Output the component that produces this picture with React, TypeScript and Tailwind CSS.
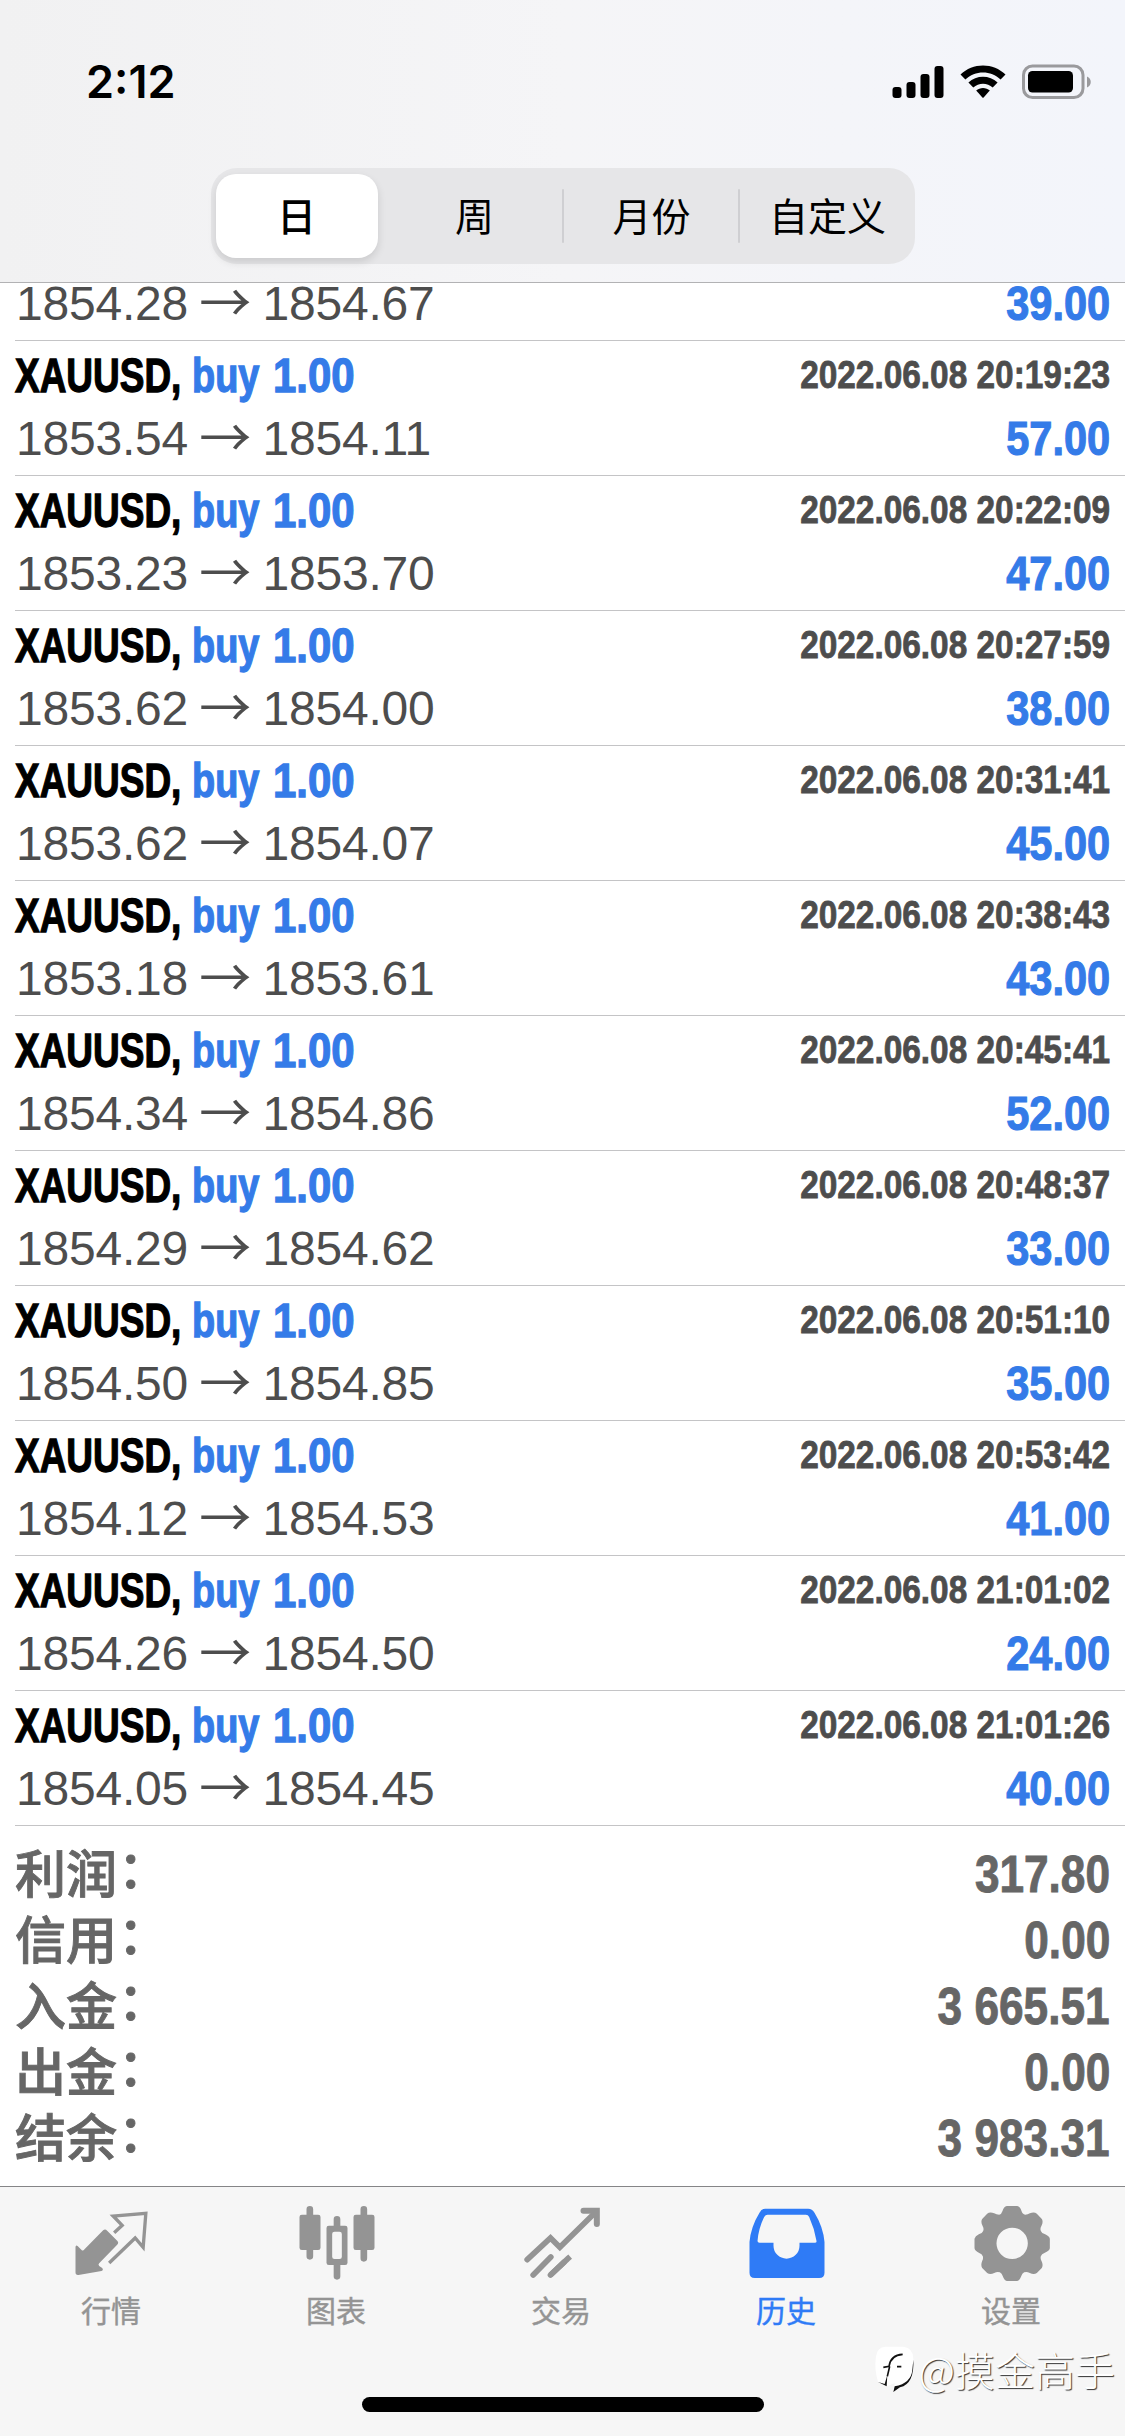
import clsx from "clsx";
import type { ReactNode } from "react";

interface Deal {
  open: string;
  close: string;
  time: string;
  profit: string;
}

const deals: Deal[] = [
  { open: "1853.54", close: "1854.11", time: "2022.06.08 20:19:23", profit: "57.00" },
  { open: "1853.23", close: "1853.70", time: "2022.06.08 20:22:09", profit: "47.00" },
  { open: "1853.62", close: "1854.00", time: "2022.06.08 20:27:59", profit: "38.00" },
  { open: "1853.62", close: "1854.07", time: "2022.06.08 20:31:41", profit: "45.00" },
  { open: "1853.18", close: "1853.61", time: "2022.06.08 20:38:43", profit: "43.00" },
  { open: "1854.34", close: "1854.86", time: "2022.06.08 20:45:41", profit: "52.00" },
  { open: "1854.29", close: "1854.62", time: "2022.06.08 20:48:37", profit: "33.00" },
  { open: "1854.50", close: "1854.85", time: "2022.06.08 20:51:10", profit: "35.00" },
  { open: "1854.12", close: "1854.53", time: "2022.06.08 20:53:42", profit: "41.00" },
  { open: "1854.26", close: "1854.50", time: "2022.06.08 21:01:02", profit: "24.00" },
  { open: "1854.05", close: "1854.45", time: "2022.06.08 21:01:26", profit: "40.00" },
];

const totals = [
  { label: "利润", value: "317.80" },
  { label: "信用", value: "0.00" },
  { label: "入金", value: "3 665.51" },
  { label: "出金", value: "0.00" },
  { label: "结余", value: "3 983.31" },
];

const periods = ["日", "周", "月份", "自定义"];

function StatusBar() {
  return (
    <div className="flex h-[168px] items-start justify-between pl-[86px] pr-[33px] pt-[54px]">
      <span className="font-['Inter'] text-[45px] font-semibold leading-[56px] text-black">2:12</span>
      <div className="flex items-center pt-[10px]">
        <svg width="52" height="34" viewBox="0 0 52 34" className="mr-[16px]">
          <rect x="0.5" y="22" width="9" height="11" rx="3" />
          <rect x="14.5" y="17" width="9" height="16" rx="3" />
          <rect x="28.5" y="9" width="9" height="24" rx="3" />
          <rect x="42.5" y="1" width="9" height="32" rx="3" />
        </svg>
        <svg width="46" height="34" viewBox="0 0 46 34" className="mr-[16px]">
          <path d="M0.5 9.6 C12.5 -2.6 33.5 -2.6 45.5 9.6 L40.6 14.6 C31 5.2 15 5.2 5.4 14.6 Z" />
          <path d="M8.4 17.6 C16.4 9.8 29.6 9.8 37.6 17.6 L32.7 22.5 C27.4 17.4 18.6 17.4 13.3 22.5 Z" />
          <path d="M16.2 25.6 C20 22.2 26 22.2 29.8 25.6 L23.6 32.4 Q23 33 22.4 32.4 Z" />
        </svg>
        <svg width="70" height="36" viewBox="0 0 70 36">
          <rect x="1.5" y="2" width="59.5" height="31.5" rx="9" fill="none" stroke="#9a9a9d" strokeWidth="3" />
          <rect x="6" y="7" width="45" height="21.5" rx="4.5" />
          <path d="M65 12.5 C70 14.5 70 21.5 65 23.5 Z" fill="#9a9a9d" />
        </svg>
      </div>
    </div>
  );
}

function PeriodPicker() {
  return (
    <div className="mx-auto grid h-24 w-[704px] grid-cols-4 rounded-[26px] bg-[#e6e6e8] font-['Noto_Sans_CJK_SC',sans-serif] text-[39px] text-black">
      {periods.map((period, index) => (
        <button key={period} type="button" className={clsx("relative flex items-center justify-center pb-[4px]", index === 0 && "pr-[4px] font-medium", index > 1 && "pl-[2px]")}>
          {index === 0 && <span className="absolute inset-y-[6px] left-[5px] right-[9px] rounded-[20px] bg-white shadow-[0_4px_8px_rgba(0,0,0,0.12)]" />}
          {index > 1 && <span className="absolute -left-px top-[21px] h-[54px] w-[2px] rounded-full bg-[#cfcfd2]" />}
          <span className="relative">{period}</span>
        </button>
      ))}
    </div>
  );
}

function Prices({ open, close }: { open: string; close: string }) {
  return (
    <span className="whitespace-pre pl-px text-[48px] tracking-[-0.2px] text-[#4d4d4d]">
      {open} <span className="relative top-[2px] -mx-[2px] font-['Noto_Sans_CJK_SC',sans-serif] text-[52px] leading-[0] tracking-normal">→</span> {close}
    </span>
  );
}

function Profit({ children }: { children: ReactNode }) {
  return <span className="origin-right scale-x-[0.865] text-[48px] font-bold text-[#347be8] [-webkit-text-stroke:1.1px_currentColor]">{children}</span>;
}

function DealRow({ deal }: { deal: Deal }) {
  return (
    <li className="ml-[15px] h-[135px] border-b border-[#c4c4c6] pr-[15px] pt-[3px]">
      <div className="flex justify-between text-[48px] font-bold leading-[63px]">
        <div className="flex [-webkit-text-stroke:1.3px_currentColor]">
          <span className="w-[177px] origin-left scale-x-[0.77] text-black">XAUUSD,</span>
          <span className="w-[81px] origin-left scale-x-[0.79] text-[#347be8]">buy</span>
          <span className="origin-left scale-x-[0.873] text-[#347be8]">1.00</span>
        </div>
        <span className="origin-right scale-x-[0.856] text-[39px] leading-[61px] text-[#4d4d4d] [-webkit-text-stroke:0.8px_currentColor]">{deal.time}</span>
      </div>
      <div className="flex justify-between leading-[63px]">
        <Prices open={deal.open} close={deal.close} />
        <Profit>{deal.profit}</Profit>
      </div>
    </li>
  );
}

function Totals() {
  return (
    <dl className="h-[360px] pl-[15px] pr-[15px] pt-[14px] text-[51px] text-[#666666]">
      {totals.map((item) => (
        <div key={item.label} className="flex h-[66px] justify-between">
          <dt className="font-['Noto_Sans_CJK_SC',sans-serif] font-medium leading-[62px] [-webkit-text-stroke:0.9px_currentColor]">
            {item.label}<span className="relative -top-[5px] left-px">：</span>
          </dt>
          <dd className="origin-right scale-x-[0.866] font-bold leading-[69px] [-webkit-text-stroke:0.9px_currentColor]">{item.value}</dd>
        </div>
      ))}
    </dl>
  );
}

function QuotesIcon() {
  return (
    <svg width="80" height="80" viewBox="97.5 69 240 240" fill="none">
      <path d="M188 151 Q194 146 200 152 L230 182 Q236 188 230 194 L176 250 Q172 254 176 258 L185 264 Q190 270 183 273 L114 285 Q105 286 105 277 V201 Q106 193 112 199 L124 211 Q128 213 132 208 Z" fill="currentColor" />
      <path d="M221 158 L245 136 L218 108 L316 100 L308 202 L284 174 L206 249" stroke="currentColor" strokeWidth="10" />
    </svg>
  );
}

function ChartIcon() {
  return (
    <svg width="80" height="80" viewBox="772.5 69 240 240" fill="none" stroke="currentColor" strokeWidth="20" strokeLinecap="round">
      <path d="M808 88 V229 M970 88 V235 M889.5 118 V145 M889.5 245 V289" />
      <rect x="777" y="104" width="63" height="106" rx="7" fill="currentColor" stroke="none" />
      <rect x="939" y="104" width="63" height="106" rx="7" fill="currentColor" stroke="none" />
      <rect x="858" y="137" width="63" height="118" rx="7" fill="currentColor" stroke="none" />
      <rect x="875" y="155" width="29" height="82" rx="7" fill="#f6f6f6" stroke="none" />
    </svg>
  );
}

function TradeIcon() {
  return (
    <svg width="80" height="80" viewBox="127.5 69 240 240" fill="none" stroke="currentColor" strokeWidth="17" strokeLinecap="round">
      <path d="M140 239 L210 174 L238 202 L345 97" />
      <path d="M309 92 H349 V132" strokeWidth="18" />
      <path d="M158 285 L211 231" />
      <path d="M210 285 L262 236 L269 230" strokeLinecap="butt" />
      <path d="M210 285 L250 247" />
    </svg>
  );
}

function HistoryIcon() {
  return (
    <svg width="80" height="80" viewBox="802.5 69 240 240" fill="currentColor">
      <path fillRule="evenodd" d="M854 86 H983 Q995 86 1002 98 Q1028 140 1032 186 V278 Q1032 294 1016 294 H823 Q807 294 807 278 V186 Q811 140 837 98 Q843 86 854 86 Z M861 104 Q855 104 851 111 Q834 146 831 183 Q831 188 837 188 H879 V197 A39 39 0 0 0 957 197 V188 H1003 Q1009 188 1008 183 Q1002 146 986 111 Q983 104 976 104 Z" />
    </svg>
  );
}

function SettingsIcon() {
  return (
    <svg width="80" height="80" viewBox="367.5 69 240 240" fill="currentColor">
      <path
        fillRule="evenodd"
        d="M469 78 H500 Q509 80 513 93 Q516 103 524 104 Q532 104 538 100 Q551 95 559 101 L574 117 Q579 125 573 137 Q568 145 571 153 Q574 161 584 163 Q596 168 598 176 V205 Q596 214 583 218 Q573 221 571 229 Q569 237 573 243 Q579 255 574 264 L559 279 Q550 285 538 279 Q529 274 521 277 Q515 280 512 289 Q508 301 500 303 H469 Q461 301 457 289 Q454 280 448 277 Q440 274 431 279 Q419 285 410 279 L395 264 Q390 255 395 243 Q399 237 397 229 Q395 221 385 218 Q374 214 372 205 V176 Q374 168 385 163 Q395 161 398 153 Q401 145 396 137 Q390 125 395 117 L410 101 Q418 95 431 100 Q438 104 446 104 Q453 103 456 93 Q460 80 469 78 Z M485 143 A47 47 0 1 0 485 237 A47 47 0 1 0 485 143 Z"
      />
    </svg>
  );
}

const tabs = [
  { label: "行情", icon: <QuotesIcon /> },
  { label: "图表", icon: <ChartIcon /> },
  { label: "交易", icon: <TradeIcon /> },
  { label: "历史", icon: <HistoryIcon />, active: true },
  { label: "设置", icon: <SettingsIcon /> },
];

function TabBar() {
  return (
    <nav className="relative h-[250px] border-t border-[#858587] bg-[#f6f6f6] pt-[16px]">
      <div className="grid grid-cols-5">
        {tabs.map((tab) => (
          <button key={tab.label} type="button" className={clsx("flex flex-col items-center", tab.active ? "text-[#2f7bf6]" : "text-[#949494]")}>
            {tab.icon}
            <span className="mt-[4px] pr-[3px] font-['Noto_Sans_CJK_SC',sans-serif] text-[30px] leading-[44px] [-webkit-text-stroke:0.4px_currentColor]">{tab.label}</span>
          </button>
        ))}
      </div>
      <div className="absolute bottom-[24px] left-[362px] h-[15px] w-[402px] rounded-full bg-black" />
      <div className="absolute right-[10px] top-[156px] flex items-center">
        <svg width="42" height="48" viewBox="72 516 126 144" className="mr-[3px]">
          <path d="M106 521 H160 Q190 524 190 558 V598 Q188 630 150 640 L130 654 L134 630 L112 640 L84 626 Q72 590 78 550 Q82 522 106 521 Z" fill="#fff" />
          <path d="M190 560 Q194 632 150 643 L130 657 L134 640 Q184 630 187 590 Z M84 627 L104 633 L112 606 L110 640 Z" fill="#111" />
          <path d="M100 583 L117 580 Q122 546 158 544 M119 580 L112 610 M141 581 H154" fill="none" stroke="#111" strokeWidth="5" />
        </svg>
        <span className="font-['Noto_Sans_CJK_SC',sans-serif] text-[40px] font-light leading-[52px] text-white [text-shadow:1px_1px_1px_#333]">@摸金高手</span>
      </div>
    </nav>
  );
}

export default function App() {
  return (
    <main className="flex h-[2436px] w-[1125px] flex-col overflow-hidden bg-white font-['Liberation_Sans',sans-serif]">
      <header className="h-[283px] shrink-0 border-b border-[#b2b2b4] bg-linear-to-r from-[#f1f1f2] via-[#f5f5f7] to-[#f3f5fb]">
        <StatusBar />
        <PeriodPicker />
      </header>
      <ul className="h-[1543px] shrink-0">
        <li className="ml-[15px] flex h-[58px] justify-between border-b border-[#c4c4c6] pr-[15px] leading-[41px]">
          <Prices open="1854.28" close="1854.67" />
          <Profit>39.00</Profit>
        </li>
        {deals.map((deal) => (
          <DealRow key={deal.time} deal={deal} />
        ))}
      </ul>
      <Totals />
      <TabBar />
    </main>
  );
}
